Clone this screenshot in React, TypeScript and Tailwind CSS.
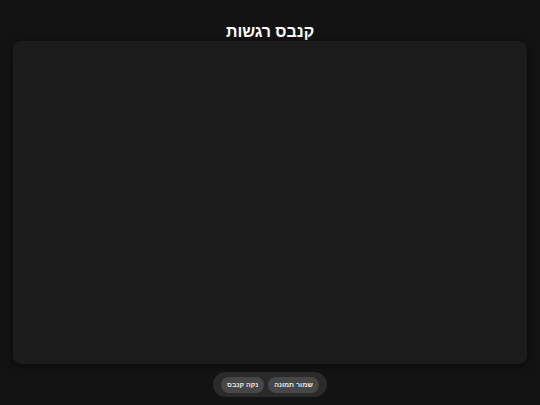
import React from "react";

export default function App() {
  return (
    <div
      dir="rtl"
      className="w-[540px] h-[405px] bg-[#131313] flex flex-col items-center px-[13px] pt-[22px] overflow-hidden"
      style={{ fontFamily: '"Liberation Sans", Arial, sans-serif' }}
    >
      <h1 className="text-[16px] leading-[19px] font-bold text-white">קנבס רגשות</h1>
      <div className="w-full h-[323px] bg-[#1c1c1c] rounded-[8px] shadow-[0_2px_8px_rgba(0,0,0,0.5)]" />
      <div className="mt-[8px] h-[25px] flex items-center gap-[4px] px-[8px] rounded-full bg-[#2a2a2a]">
        <button className="h-[16px] px-[6px] rounded-full bg-[#474747] text-[#e8e8e8] text-[7px] font-bold leading-none">
          שמור תמונה
        </button>
        <button className="h-[16px] px-[6px] rounded-full bg-[#474747] text-[#e8e8e8] text-[7px] font-bold leading-none">
          נקה קנבס
        </button>
      </div>
    </div>
  );
}
